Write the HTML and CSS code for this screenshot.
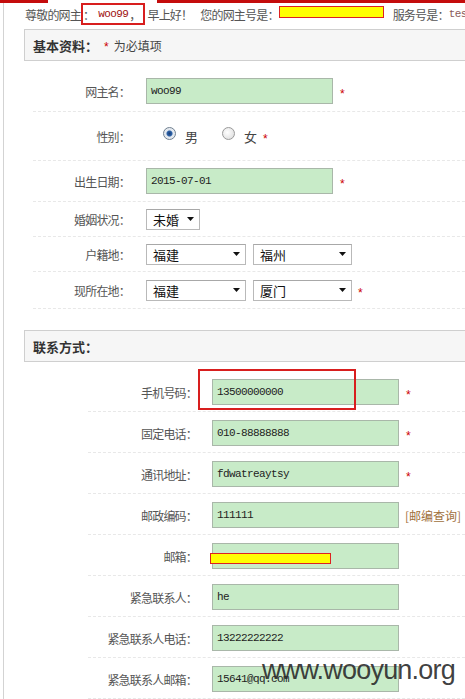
FILE: index.html
```html
<!DOCTYPE html>
<html lang="zh-CN">
<head>
    <meta charset="UTF-8">
    <title>网主资料</title>
    <link rel="stylesheet" href="styles.css">
</head>
<body>
    <div class="topbar">
        <span class="bar red first"></span>
        <span class="bar tab"></span>
        <span class="bar red rest"></span>
    </div>
    <div class="page">
        <div class="greet">
            <span>尊敬的网主</span>
            <span class="hl">：<span class="mono name">woo99</span>，</span>
            <span class="seg">早上好！</span>
            <span class="seg gap8">您的网主号是：</span><span class="redact"></span>
            <span class="seg gap9">服务号是：</span><span class="mono svc">test01</span>
        </div>

        <div class="sec-head"><b>基本资料：</b><span class="req">*</span> 为必填项</div>
        <div class="sec basic">
            <div class="row h41">
                <label>网主名：</label>
                <div class="field">woo99</div>
                <span class="req">*</span>
            </div>
            <div class="row h49">
                <label>性别：</label>
                <span class="radio checked"></span><span class="opt">男</span>
                <span class="radio"></span><span class="opt">女</span>
                <span class="req">*</span>
            </div>
            <div class="row h41">
                <label>出生日期：</label>
                <div class="field">2015-07-01</div>
                <span class="req">*</span>
            </div>
            <div class="row h35">
                <label>婚姻状况：</label>
                <div class="select w54">未婚<svg width="7" height="4" viewBox="0 0 7 4"><path d="M0 0h7L3.5 4z" fill="#111"/></svg></div>
            </div>
            <div class="row h35">
                <label>户籍地：</label>
                <div class="select w100">福建<svg width="7" height="4" viewBox="0 0 7 4"><path d="M0 0h7L3.5 4z" fill="#111"/></svg></div>
                <div class="select w99">福州<svg width="7" height="4" viewBox="0 0 7 4"><path d="M0 0h7L3.5 4z" fill="#111"/></svg></div>
            </div>
            <div class="row h37">
                <label>现所在地：</label>
                <div class="select w100">福建<svg width="7" height="4" viewBox="0 0 7 4"><path d="M0 0h7L3.5 4z" fill="#111"/></svg></div>
                <div class="select w99">厦门<svg width="7" height="4" viewBox="0 0 7 4"><path d="M0 0h7L3.5 4z" fill="#111"/></svg></div>
                <span class="req">*</span>
            </div>
        </div>

        <div class="sec-head"><b>联系方式：</b></div>
        <div class="sec contact">
            <div class="row">
                <label>手机号码：</label>
                <div class="field">13500000000<span class="mark-box"></span></div>
                <span class="req">*</span>
            </div>
            <div class="row">
                <label>固定电话：</label>
                <div class="field">010-88888888</div>
                <span class="req">*</span>
            </div>
            <div class="row">
                <label>通讯地址：</label>
                <div class="field">fdwatreaytsy</div>
                <span class="req">*</span>
            </div>
            <div class="row">
                <label>邮政编码：</label>
                <div class="field">111111</div>
                <a class="lookup">[邮编查询]</a>
            </div>
            <div class="row">
                <label>邮箱：</label>
                <div class="field"><span class="redact mail"></span></div>
            </div>
            <div class="row">
                <label>紧急联系人：</label>
                <div class="field">he</div>
            </div>
            <div class="row">
                <label>紧急联系人电话：</label>
                <div class="field">13222222222</div>
            </div>
            <div class="row">
                <label>紧急联系人邮箱：</label>
                <div class="field">15641@qq.com</div>
            </div>
        </div>

        <div class="watermark">www.wooyun.org</div>
    </div>
</body>
</html>
```
FILE: styles.css
```css
html {
    overflow: hidden;
}

body {
    margin: 0;
    font-family: "Noto Sans CJK SC", sans-serif;
    font-size: 12px;
    letter-spacing: -0.8px;
    color: #555;
    background: #fff;
}

.topbar {
    display: flex;
    height: 3px;
    width: 900px;
}

.bar.red {
    background: #c40c0c;
}

.bar.first {
    width: 48px;
}

.bar.tab {
    width: 109px;
}

.bar.rest {
    flex: 1;
}

.page {
    position: relative;
    width: 800px;
    margin-left: 3px;
    padding-left: 20px;
    border-left: 1px solid #d3d3d3;
    padding-bottom: 40px;
}

.mono {
    font-family: "Liberation Mono", monospace;
    font-size: 11px;
    letter-spacing: -0.6px;
}

.greet {
    display: flex;
    align-items: center;
    height: 22px;
    margin-bottom: 4px;
    margin-left: 1px;
    white-space: nowrap;
    color: #555;
}

.hl {
    display: flex;
    align-items: center;
    height: 22px;
    box-sizing: border-box;
    border: 2px solid #d81e1e;
    padding-right: 3px;
    margin-right: 2px;
}

.name {
    color: #a01010;
    margin-left: 4px;
    margin-right: 1px;
}

.gap8 {
    margin-left: 8px;
}

.gap9 {
    margin-left: 9px;
}

.svc {
    color: #8a5a5a;
}

.redact {
    display: inline-block;
    width: 105px;
    height: 12px;
    box-sizing: border-box;
    background: #ffff00;
    border: 1px solid #d22;
    margin-top: -4px;
}

.sec-head {
    display: flex;
    align-items: center;
    height: 32px;
    box-sizing: border-box;
    padding-left: 8px;
    background: #f6f6f6;
    border: 1px solid #cfcfcf;
    color: #444;
    letter-spacing: 0;
}

.sec-head b {
    font-size: 13px;
    color: #333;
}

.sec-head .req {
    margin: 0 5px 0 6px;
    padding-top: 4px;
}

.req {
    color: #c00;
    font-family: "Liberation Sans", sans-serif;
    font-size: 12px;
    letter-spacing: 0;
    padding-top: 5px;
}

.row {
    display: flex;
    align-items: center;
    box-sizing: border-box;
    border-bottom: 1px dashed #e8e8e8;
}

.row label {
    text-align: right;
    color: #555;
}

.field {
    position: relative;
    display: flex;
    align-items: center;
    width: 187px;
    height: 26px;
    box-sizing: border-box;
    padding-left: 4px;
    background: #c8ebc8;
    border: 1px solid #a9b7a9;
    font-family: "Liberation Mono", monospace;
    font-size: 11px;
    letter-spacing: -0.6px;
    color: #222;
}

.field + .req {
    margin-left: 7px;
}

/* 基本资料 */
.basic {
    padding-top: 10px;
    margin-bottom: 21px;
}

.basic .row {
    margin-left: 9px;
}

.basic label {
    width: 97px;
    margin-right: 16px;
}

.h41 { height: 41px; }
.h49 { height: 49px; }
.h35 { height: 35px; }
.h37 { height: 37px; }

.radio {
    width: 13px;
    height: 13px;
    box-sizing: border-box;
    border-radius: 50%;
    border: 1px solid #9a9a9a;
    background: radial-gradient(circle at 40% 40%, #ffffff 0, #e4e4e4 70%, #cfcfcf 100%);
    margin-left: 17px;
    margin-top: -6px;
}

.opt + .radio {
    margin-left: 24px;
}

.radio.checked {
    border-color: #6f7f90;
    background: radial-gradient(circle, #1b3f78 0, #2c62a8 2.5px, #dfe6ee 3.5px, #f4f4f4 100%);
}

.opt {
    margin-left: 9px;
    font-size: 13px;
    letter-spacing: 0;
    color: #444;
}

.opt + .req {
    margin-left: 6px;
}

.select {
    display: flex;
    align-items: center;
    justify-content: space-between;
    height: 21px;
    box-sizing: border-box;
    padding: 0 5px 0 6px;
    border: 1px solid #b9b9b9;
    border-top-color: #a8a8a8;
    background: #fff;
    font-size: 13px;
    letter-spacing: 0;
    color: #111;
}

.select + .select {
    margin-left: 7px;
}

.select + .req {
    margin-left: 6px;
}

.w54 { width: 54px; }
.w100 { width: 100px; }
.w99 { width: 99px; }

/* 联系方式 */
.contact {
    padding-top: 9px;
}

.contact .row {
    margin-left: 64px;
    padding: 8px 0 6px;
}

.contact label {
    width: 109px;
    margin-right: 15px;
}

.lookup {
    margin-left: 6px;
    color: #a0703c;
    font-size: 12px;
    letter-spacing: 0;
}

.mark-box {
    position: absolute;
    left: -15px;
    top: -11px;
    width: 158px;
    height: 41px;
    box-sizing: border-box;
    border: 2px solid #d81e1e;
}

.redact.mail {
    position: absolute;
    left: -3px;
    top: 9px;
    width: 121px;
    height: 11px;
    margin-top: 0;
}

.watermark {
    position: absolute;
    left: 258px;
    top: 652px;
    font-family: "Liberation Sans", Arial, sans-serif;
    font-size: 27px;
    letter-spacing: -0.8px;
    color: rgba(40, 40, 40, 0.9);
}
```
